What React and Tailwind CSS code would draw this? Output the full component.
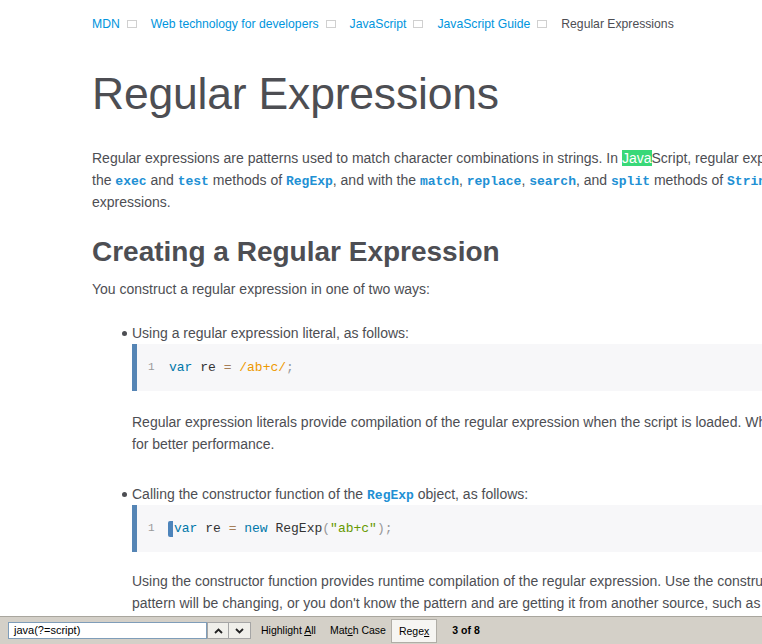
import React from 'react';

const Sep = () => (
  <span className="inline-block w-[10px] h-[8px] border border-[#d0d0d0] ml-[7px] mr-[14px] align-middle" />
);

const Code = ({ children }) => (
  <code className="font-['Liberation_Mono',monospace] text-[13px] leading-none font-bold text-[#2190d4]">{children}</code>
);

const Crumbs = () => (
  <div className="h-[48px] flex items-center text-[12.2px] font-['Liberation_Sans',Arial,sans-serif] whitespace-nowrap">
    <a className="text-[#0095dd]">MDN</a>
    <Sep />
    <a className="text-[#0095dd]">Web technology for developers</a>
    <Sep />
    <a className="text-[#0095dd]">JavaScript</a>
    <Sep />
    <a className="text-[#0095dd]">JavaScript Guide</a>
    <Sep />
    <span className="text-[#4d4e53]">Regular Expressions</span>
  </div>
);

const CodeBlock = ({ children }) => (
  <div className="h-[47px] w-[700px] bg-[#f7f7f9] border-l-[5px] border-[#5585b5] flex items-center pl-[11px] font-['Liberation_Mono',monospace] text-[13px] leading-none whitespace-nowrap">
    <span className="text-[#999] text-[11px] w-[21px]">1</span>
    {children}
  </div>
);

const Bullet = () => (
  <span className="absolute left-[-10px] top-[9px] w-[5px] h-[5px] rounded-full bg-[#4d4e53]" />
);

export default function App() {
  return (
    <div className="w-[762px] h-[644px] overflow-hidden flex flex-col bg-white font-['Liberation_Sans',Arial,sans-serif] text-[#4d4e53]">
      <main className="flex-1 overflow-hidden pl-[92px]">
        <div className="w-[1000px]">
          <Crumbs />
          <h1 className="text-[44.5px] leading-[56px] mt-[18px] tracking-[-0.2px] text-[#4d4e53]">Regular Expressions</h1>
          <p className="mt-[25px] text-[14px] leading-[22px] whitespace-nowrap">
            Regular expressions are patterns used to match character combinations in strings. In <span className="bg-[#38d878] text-white">Java</span>Script, regular expressions are also objects. These patterns are used with
            <br />
            the <Code>exec</Code> and <Code>test</Code> methods of <Code>RegExp</Code>, and with the <Code>match</Code>, <Code>replace</Code>, <Code>search</Code>, and <Code>split</Code> methods of <Code>String</Code>. This chapter describes JavaScript regular
            <br />
            expressions.
          </p>
          <h2 className="mt-[22px] text-[28px] leading-[34px] font-bold">Creating a Regular Expression</h2>
          <p className="mt-[9px] text-[14px] leading-[22px]">You construct a regular expression in one of two ways:</p>

          <ul className="mt-[22px] pl-[40px] text-[14px] leading-[22px]">
            <li className="relative">
              <Bullet />
              Using a regular expression literal, as follows:
              <CodeBlock>
                <span className="text-[#0077aa]">var</span>
                <span className="text-[#333]">&nbsp;re&nbsp;</span>
                <span className="text-[#a67f59]">=</span>
                <span>&nbsp;</span>
                <span className="text-[#ee9900]">/ab+c/</span>
                <span className="text-[#999]">;</span>
              </CodeBlock>
              <p className="mt-[20px] whitespace-nowrap">
                Regular expression literals provide compilation of the regular expression when the script is loaded. When the regular expression will remain constant, use this
                <br />
                for better performance.
              </p>
            </li>
            <li className="relative mt-[28px]">
              <Bullet />
              Calling the constructor function of the <Code>RegExp</Code> object, as follows:
              <CodeBlock>
                <span className="inline-block w-[5px] h-[16px] rounded-l-[2px] bg-[#4d84bb] -ml-[1px] mr-[1px] align-middle" />
                <span className="text-[#0077aa]">var</span>
                <span className="text-[#333]">&nbsp;re&nbsp;</span>
                <span className="text-[#a67f59]">=</span>
                <span>&nbsp;</span>
                <span className="text-[#0077aa]">new</span>
                <span className="text-[#333]">&nbsp;RegExp</span>
                <span className="text-[#999]">(</span>
                <span className="text-[#669900]">"ab+c"</span>
                <span className="text-[#999]">);</span>
              </CodeBlock>
              <p className="mt-[18px] whitespace-nowrap">
                Using the constructor function provides runtime compilation of the regular expression. Use the constructor function when you know the regular expression
                <br />
                pattern will be changing, or you don't know the pattern and are getting it from another source, such as user input.
              </p>
            </li>
          </ul>
        </div>
      </main>

      <footer className="h-[28px] shrink-0 bg-[#d4d0c8] border-t border-[#a9a69e] flex items-center text-[10.5px] text-black font-['Liberation_Sans',Tahoma,sans-serif] whitespace-nowrap">
        <div className="ml-[8px] w-[199px] h-[17px] bg-white border border-[#7f9db9] flex items-center pl-[5px] text-[11px]">
          java(?=script)
        </div>
        <div className="flex h-[17px]">
          <button className="w-[22px] h-[17px] border border-[#a5a5a5] bg-[#f0efea] flex items-center justify-center">
            <svg width="9" height="6" viewBox="0 0 9 6"><path d="M1 5 L4.5 1.5 L8 5" fill="none" stroke="#222" strokeWidth="1.8" /></svg>
          </button>
          <button className="w-[22px] h-[17px] border border-l-0 border-[#a5a5a5] bg-[#f0efea] flex items-center justify-center">
            <svg width="9" height="6" viewBox="0 0 9 6"><path d="M1 1 L4.5 4.5 L8 1" fill="none" stroke="#222" strokeWidth="1.8" /></svg>
          </button>
        </div>
        <span className="ml-[10px]">Highlight <u>A</u>ll</span>
        <span className="ml-[14px]">Mat<u>c</u>h Case</span>
        <span className="ml-[5px] h-[24px] px-[7px] bg-[#f6f5f2] border border-[#b0ada6] flex items-center pt-[2px]">Rege<u>x</u></span>
        <span className="ml-[15px] font-bold">3 of 8</span>
      </footer>
    </div>
  );
}
